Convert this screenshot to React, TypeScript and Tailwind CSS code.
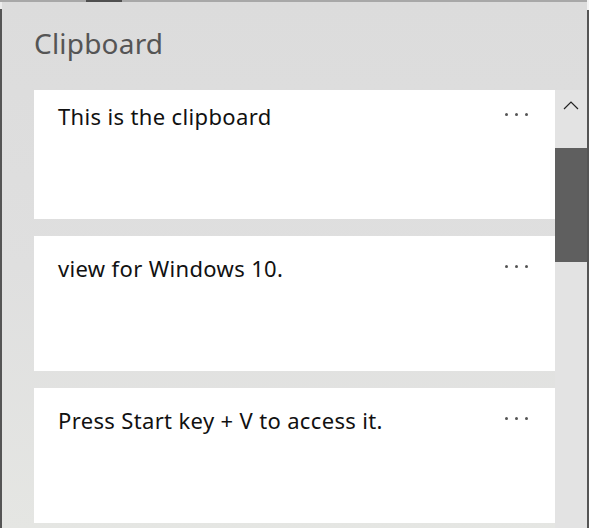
import React from "react";

const clips = [
  { text: "This is the clipboard" },
  { text: "view for Windows 10." },
  { text: "Press Start key + V to access it." },
];

function Dots() {
  return (
    <div className="flex gap-[7px]">
      <span className="w-[3px] h-[3px] rounded-full bg-[#555]" />
      <span className="w-[3px] h-[3px] rounded-full bg-[#555]" />
      <span className="w-[3px] h-[3px] rounded-full bg-[#555]" />
    </div>
  );
}

export default function App() {
  return (
    <div
      className="w-[589px] h-[528px] flex flex-col overflow-hidden bg-gradient-to-b from-[#dcdcdc] via-[#dfdfdf] to-[#e5e6e3]"
      style={{ fontFamily: '"Noto Sans", "Open Sans", sans-serif' }}
    >
      {/* window top edge */}
      <div className="flex h-[2px] shrink-0">
        <div className="w-[86px] bg-[#a8a8a8]" />
        <div className="w-[36px] bg-[#4f4f4f]" />
        <div className="flex-1 bg-[#a8a8a8]" />
        <div className="w-[2px] bg-[#f4f4f4]" />
      </div>

      <div className="flex flex-1 min-h-0">
        <div className="w-[2px] flex flex-col">
          <div className="h-[7px] bg-[#ececec]" />
          <div className="flex-1 bg-[#555]" />
        </div>

        <div className="flex-1 flex flex-col min-w-0">
          <h1 className="pl-[32px] pt-[24px] h-[88px] text-[28px] leading-[34px] text-[#555] tracking-[0.2px]">
            Clipboard
          </h1>

          <div className="flex flex-1 min-h-0 pl-[32px]">
            <div className="flex-1 overflow-hidden">
              <div className="flex flex-col gap-[17px] -mt-[6px]">
                {clips.map((c, i) => (
                  <div key={i} className="h-[135px] bg-white flex items-start justify-between pl-[24px] pr-[27px] pt-[17px]">
                    <p className="text-[22px] leading-[30px] text-[#111] tracking-[0.35px]">{c.text}</p>
                    <div className="pt-[12px]">
                      <Dots />
                    </div>
                  </div>
                ))}
              </div>
            </div>

            {/* scrollbar */}
            <div className="w-[32px] bg-[#e3e3e3] flex flex-col">
              <div className="h-[58px] flex justify-center pt-[10px]">
                <svg width="16" height="10" viewBox="0 0 16 10" fill="none">
                  <path d="M1 9 L8 2 L15 9" stroke="#222" strokeWidth="1.2" />
                </svg>
              </div>
              <div className="h-[114px] bg-[#5f5f5f]" />
            </div>
          </div>
        </div>

        <div className="w-[2px] flex flex-col">
          <div className="h-[8px] bg-[#f4f4f4]" />
          <div className="flex-1 bg-[#555]" />
        </div>
      </div>
    </div>
  );
}
